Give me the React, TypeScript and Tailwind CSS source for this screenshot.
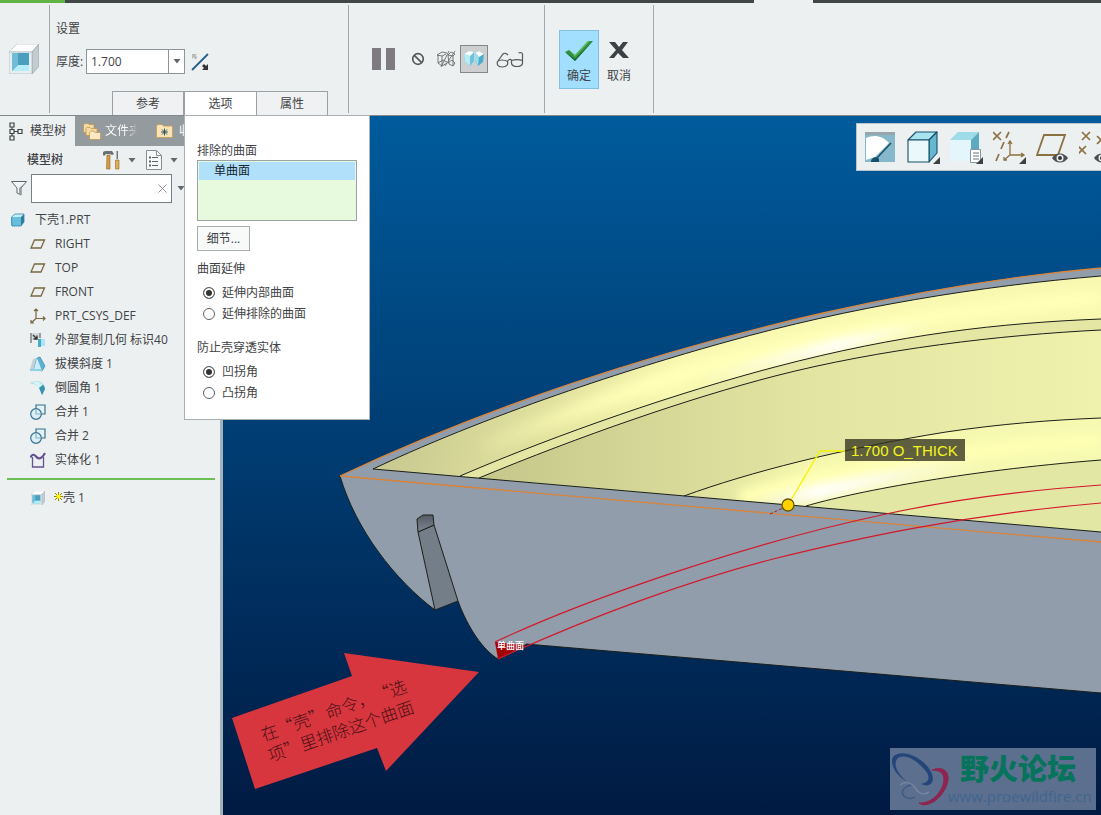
import { useState } from "react";
import type { ReactNode } from "react";

const font =
  "font-['Open_Sans','Noto_Sans_CJK_SC',sans-serif] text-xs text-[#3f4345]";

const Caret = () => (
  <svg width="8" height="5" viewBox="0 0 8 5" aria-hidden="true">
    <path d="M.5 0h7L4 4.500z" fill="#62686b" />
  </svg>
);

const ShellIcon = ({ size }: { size: number }) => (
  <svg width={size} height={size} viewBox="0 0 30 30" aria-hidden="true">
    <path d="M0 8 8 0h22l-7 8z" fill="#fff" stroke="#b9c2c6" strokeWidth=".7" />
    <path d="M23 8 30 0v22l-7 8z" fill="#c3ccd1" stroke="#929da3" strokeWidth=".7" />
    <path d="M0 8h23v22H0z" fill="#e8eff3" stroke="#a3b3bb" strokeWidth=".7" />
    <path d="M3 9h17v18H3z" fill="#7cc4dc" />
    <path d="M9 9h11v12H9z" fill="#4b9fbe" />
    <path d="M3 27l6-6h11v6z" fill="#b4ecf8" />
    <path d="M3 9l6 0v12l-6 6z" fill="#70bbd5" />
  </svg>
);

const FlipIcon = () => (
  <svg width="18" height="18" viewBox="0 0 18 18" aria-hidden="true">
    <path d="M1 17 17 1" stroke="#235f86" strokeWidth="1.8" />
    <path d="M1 1h5L4.500 2.500l2 2-2 2-2-2L1 6z" fill="#b9bcb9" />
    <path d="M17 17h-6l2-2-2-2 2-2 2 2 2-2z" fill="#333" />
  </svg>
);

const PauseIcon = () => (
  <svg width="23" height="22" viewBox="0 0 23 22" aria-hidden="true">
    <path d="M0 0h9v22H0zM14 0h9v22h-9z" fill="#7d7b7f" />
  </svg>
);

const NoneIcon = () => (
  <svg width="14" height="14" viewBox="0 0 14 14" fill="none" stroke="#55595b" strokeWidth="1.7" aria-hidden="true">
    <circle cx="7" cy="7" r="5.3" />
    <path d="M3.3 3.3 10.7 10.7" />
  </svg>
);

const WireIcon = () => (
  <svg width="20" height="18" viewBox="0 0 20 18" fill="none" stroke="#686c6e" strokeWidth=".9" aria-hidden="true">
    <path d="M1 5l5-3 5 1M1 5l5 1 4-2M2 5v8l4 3V6M6 16l5-3M12 5l5 1 2-2-4-2zM12 5l1 9 4 2V6M17 16l2-3M13 1 5 17M19 1 9 16M2 13l5-3 4 2M12 13l4-3 3 3" />
  </svg>
);

const GeometryIcon = () => (
  <svg width="20" height="16" viewBox="0 0 20 16" aria-hidden="true">
    <path d="M0 3l5-3 5 1 0 9-4 5-5-4z" fill="#6cc3dc" />
    <path d="M0 3l5-3 5 1-4 4z" fill="#fff" />
    <path d="M0 3l6 2v10l-5-4z" fill="#b9eaf5" />
    <path d="M11 2l4-2 5 3-1 8-5 4-3-5z" fill="#4badc9" />
    <path d="M11 2l4-2 5 3-5 3z" fill="#fff" />
    <path d="M11 2l4 4-1 9-3-5z" fill="#9bdeed" />
  </svg>
);

const GlassesIcon = () => (
  <svg width="28" height="17" viewBox="0 0 28 17" fill="none" stroke="#55595b" strokeWidth="1.2" aria-hidden="true">
    <path d="M1.500 10.500c2-2 7-2 10 0 1 3-1 5.500-5 5.500s-6-2-5-5.500zM15.500 9.500c3-1 8-1 11 0v3c-1 4-10 4-11 0zM11.500 10.500c1-2 3-3 4-1M2 10l5-7c1-1 3-1 5 1M26.500 9.500V3c0-1-2-2-4-1" />
  </svg>
);

const CheckIcon = () => (
  <svg width="30" height="22" viewBox="0 0 30 22" aria-hidden="true">
    <path d="M1 12l4-2 6 5L24 1h5L11 21z" fill="#2f9140" />
    <path d="M5 10l6 5L24 1h2L11 17z" fill="#5bbd5a" />
    <path d="M1 12l10 7L29 1 11 21z" fill="#1b6a33" />
  </svg>
);

const CrossIcon = () => (
  <svg width="20" height="17" viewBox="0 0 20 17" aria-hidden="true">
    <path d="M0 0h6l4 5 4-5h5l-6 8 7 8h-6l-5-5-4 5H0l7-8z" fill="#3b4144" />
  </svg>
);

const TreeTabIcon = () => (
  <svg width="14" height="19" viewBox="0 0 14 19" fill="none" stroke="#3b4144" strokeWidth="1.2" aria-hidden="true">
    <path d="M1 1h4v4H1zM1 14h4v4H1zM9 7.500h4v4H9zM1 7.500h4v4H1zM3 5v2M3 12v2M5 9.500h4" />
  </svg>
);

const FoldersIcon = () => (
  <svg width="18" height="17" viewBox="0 0 18 17" fill="#f3d9a4" stroke="#bf9048" strokeWidth=".7" aria-hidden="true">
    <path d="M.5 1.5 2 .5h3l1 1h5v8H.5z" />
    <path d="M3 5.5l1-1h3l1 1h6v7H3z" />
    <path d="M6.500 9.500 8 8h3l1 1.500h5.500v7h-11z" fill="#fae9c2" />
  </svg>
);

const FavoritesIcon = () => (
  <svg width="17" height="14" viewBox="0 0 17 14" aria-hidden="true">
    <path d="M.5 2 2 .5h4L7.500 2h9v11.500H.5z" fill="#f8e4b6" stroke="#c99b52" strokeWidth=".8" />
    <path d="M8.500 4.500v7M5 8h7M6 5.500l5 5M11 5.500l-5 5" stroke="#234b5b" strokeWidth=".9" />
  </svg>
);

const ToolsIcon = () => (
  <svg width="17" height="20" viewBox="0 0 17 20" aria-hidden="true">
    <path d="M0 2l2-1h7l2 3-2 1-2-1H3L1 6 0 5z" fill="#6b7175" />
    <path d="M4 5h3v14H3.500z" fill="#d69a45" stroke="#8f6427" strokeWidth=".6" />
    <path d="M13.500 1h1.500v8h-1.500z" fill="#70777b" />
    <path d="M12.500 10h3.500v9h-3.500z" fill="#e0ad58" stroke="#8f6427" strokeWidth=".6" />
  </svg>
);

const DocIcon = () => (
  <svg width="16" height="20" viewBox="0 0 16 20" fill="none" stroke="#5e6568" aria-hidden="true">
    <path d="M.5.5h10l5 5v14H.5z" fill="#f8fafa" stroke="#868e92" />
    <path d="M10.500.5v5h5" stroke="#868e92" />
    <path d="M6 7.500h6M6 11.500h6M6 15.500h6" />
    <path d="M3 7.500h2M3 11.500h2M3 15.500h2" strokeWidth="2" />
  </svg>
);

const FunnelIcon = () => (
  <svg width="16" height="15" viewBox="0 0 16 15" aria-hidden="true">
    <path d="M.5.5h15L10 7v7L6 12V7z" fill="#f4f6f7" stroke="#5e6568" />
    <path d="M8 7v6l2 1V7l5-6z" fill="#9aa1a4" />
  </svg>
);

const PartIcon = () => (
  <svg width="14" height="14" viewBox="0 0 14 14" aria-hidden="true">
    <path d="M0 4l4-3h9l-3 3z" fill="#c5eef8" />
    <path d="M0 4h10v9H1L0 12z" fill="#69bfdb" />
    <path d="M10 4l3-3v8l-3 4z" fill="#2d7c9d" />
    <path d="M.5 4 4 1h9v8l-3 4H1z" fill="none" stroke="#3587a8" strokeWidth=".8" />
  </svg>
);

const PlaneIcon = () => (
  <svg width="16" height="16" viewBox="0 0 16 16" fill="none" stroke="#77683d" strokeWidth="1.300" aria-hidden="true">
    <path d="M4.500 4h10l-3.500 8H1z" />
  </svg>
);

const CsysIcon = () => (
  <svg width="16" height="16" viewBox="0 0 16 16" fill="none" stroke="#77683d" strokeWidth="1.200" aria-hidden="true">
    <path d="M6 1v9.500h9M6 10.500 1 15M4 3l2-2 2 2M13 8.500l2 2-2 2M1 12v3h3" />
  </svg>
);

const CopyGeomIcon = () => (
  <svg width="16" height="16" viewBox="0 0 16 16" aria-hidden="true">
    <path d="M1 1v10M10 1v5" stroke="#5f6669" strokeWidth="1.200" />
    <path d="M2 1h7v7H2z" fill="#d3d9dc" />
    <path d="M3 3l4 4M7 3.500V7H3.500" fill="none" stroke="#333" strokeWidth="1.300" />
    <path d="M8 7h7v7H8z" fill="#a9e5f5" />
    <path d="M8 7h3v8H8z" fill="#4aa8cb" />
  </svg>
);

const DraftIcon = () => (
  <svg width="16" height="16" viewBox="0 0 16 16" aria-hidden="true">
    <path d="M0 13 3 3l3-1v12z" fill="#c3d2d8" />
    <path d="M4 13 7 2l3-1 5 9-3 5z" fill="#5ab2d2" stroke="#3787a8" strokeWidth=".7" />
    <path d="M4 13 7 2l5 13z" fill="#c9eff9" />
    <path d="M0 13h12v2H0z" fill="#8fd0e2" />
  </svg>
);

const RoundIcon = () => (
  <svg width="16" height="16" viewBox="0 0 16 16" aria-hidden="true">
    <path d="M0 3l6-2c6 1 9 4 9 8l-3 6c0-6-4-11-12-12z" fill="#5ab4d1" />
    <path d="M0 3l6-2c4 1 6 2 7 4L9 8C7 5 4 3 0 3z" fill="#d5f4fa" />
    <path d="M9 8l4-3 2 4-3 6z" fill="#3c91b3" />
  </svg>
);

const MergeIcon = () => (
  <svg width="16" height="16" viewBox="0 0 16 16" fill="none" stroke="#37718f" strokeWidth="1.200" aria-hidden="true">
    <path d="M6 5.500V1h9v9h-4" fill="#e2f1f6" />
    <circle cx="6" cy="10" r="5.300" fill="#dceff5" />
    <path d="M6 5v5h5" stroke="#7fb5cb" />
  </svg>
);

const SolidifyIcon = () => (
  <svg width="16" height="16" viewBox="0 0 16 16" fill="none" stroke="#67508f" aria-hidden="true">
    <path d="M2.500 5v10h11V5" strokeWidth="1.300" />
    <path d="M.5 5.500C2 2 4 2 6 4.500S11 8 15 1" strokeWidth="2.200" />
  </svg>
);

type Item = { label: string; icon: ReactNode };

const features: Item[] = [
  { label: "RIGHT", icon: <PlaneIcon /> },
  { label: "TOP", icon: <PlaneIcon /> },
  { label: "FRONT", icon: <PlaneIcon /> },
  { label: "PRT_CSYS_DEF", icon: <CsysIcon /> },
  { label: "外部复制几何 标识40", icon: <CopyGeomIcon /> },
  { label: "拔模斜度 1", icon: <DraftIcon /> },
  { label: "倒圆角 1", icon: <RoundIcon /> },
  { label: "合并 1", icon: <MergeIcon /> },
  { label: "合并 2", icon: <MergeIcon /> },
  { label: "实体化 1", icon: <SolidifyIcon /> },
];

const RadioGroup = ({ name, title, options }: { name: string; title: string; options: string[] }) => {
  const [value, setValue] = useState(options[0]);
  return (
    <fieldset>
      <legend className="leading-5">{title}</legend>
      <div className="pl-1.5 pt-[3px]">
        {options.map((o) => (
          <label key={o} className="flex h-[21px] items-center gap-[7px]">
            <input
              type="radio"
              name={name}
              checked={value === o}
              onChange={() => setValue(o)}
              className="size-3 appearance-none rounded-full border border-[#5c6265] bg-white checked:bg-[#333] checked:shadow-[inset_0_0_0_2px_white]"
            />
            {o}
          </label>
        ))}
      </div>
    </fieldset>
  );
};

const OptionsPanel = () => (
  <div className="absolute left-0 top-full z-20 w-[186px] border border-[#a8b0b4] bg-white pb-4 pl-3 pr-3 pt-[26px] text-left text-[#3f4345]">
    <p className="leading-[18px]">排除的曲面</p>
    <ul role="listbox" aria-label="排除的曲面" className="h-[61px] border border-[#9aa3a7] bg-[#e8fade] p-px">
      <li role="option" aria-selected="true" className="bg-[#b0e0fa] pl-[15px] leading-[18px] text-[#16242c]">
        单曲面
      </li>
    </ul>
    <button className="mt-[5px] h-[25px] w-[53px] border border-[#a8adb0] bg-[#f8f9f9]">细节...</button>
    <div className="mt-2 flex flex-col gap-3.5">
      <RadioGroup name="extend" title="曲面延伸" options={["延伸内部曲面", "延伸排除的曲面"]} />
      <RadioGroup name="corner" title="防止壳穿透实体" options={["凹拐角", "凸拐角"]} />
    </div>
  </div>
);

const Ribbon = () => (
  <header className="flex h-[113px] border-b border-[#81898c] bg-[#edf0f1]">
    <div className="flex w-[49px] items-center pl-[9px]">
      <ShellIcon size={30} />
    </div>
    <Divider />
    <section className="flex w-[298px] flex-col pt-[17px]">
      <h2 className="pl-1.5 leading-[18px]">设置</h2>
      <div className="mt-[11px] flex h-[25px] items-center pl-1.5">
        <label htmlFor="thickness" className="w-[30px] whitespace-nowrap">
          厚度:
        </label>
        <div className="flex h-[25px] w-[99px] border border-[#8d9598] bg-white">
          <input id="thickness" defaultValue="1.700" className="w-full min-w-0 px-1 outline-none" />
          <button aria-label="厚度列表" className="flex w-4 shrink-0 items-center justify-center border-l border-[#8d9598]">
            <Caret />
          </button>
        </div>
        <button aria-label="反向" className="ml-1.5">
          <FlipIcon />
        </button>
      </div>
      <nav className="mt-auto flex pl-[62px]">
        <button className="h-6 w-[72px] border border-b-0 border-[#9aa1a4] bg-[#eff1f2]">参考</button>
        <div className="relative">
          <button className="h-6 w-[72px] border-l border-t border-[#9aa1a4] bg-white">选项</button>
          <OptionsPanel />
        </div>
        <button className="h-6 w-[72px] border border-b-0 border-[#9aa1a4] bg-[#eff1f2]">属性</button>
      </nav>
    </section>
    <Divider />
    <section className="flex w-[195px] items-center pl-[23px]">
      <button aria-label="暂停">
        <PauseIcon />
      </button>
      <button aria-label="无预览" className="ml-4">
        <NoneIcon />
      </button>
      <button aria-label="分离" className="ml-[11px]">
        <WireIcon />
      </button>
      <button aria-label="连接" className="ml-1 flex size-7 items-center justify-center border border-[#83888a] bg-[#cdcfd0]">
        <GeometryIcon />
      </button>
      <button aria-label="特征预览" className="ml-2">
        <GlassesIcon />
      </button>
    </section>
    <Divider />
    <section className="flex w-[108px] items-center pl-3.5">
      <button className="flex h-[59px] w-10 flex-col items-center justify-between border border-[#83bfe0] bg-[#a2dfff] pb-[3px] pt-[9px]">
        <CheckIcon />
        <span className="leading-[18px]">确定</span>
      </button>
      <button className="flex h-[59px] w-10 flex-col items-center justify-between pb-1 pt-3">
        <CrossIcon />
        <span className="leading-[18px]">取消</span>
      </button>
    </section>
    <Divider />
  </header>
);

const Divider = () => <div className="my-0.5 w-px shrink-0 bg-[#a2a9ac]" />;

const ModelTree = () => (
  <aside className="w-[223px] shrink-0 border-r-[3px] border-[#a3b1bb] bg-[#edf0f1]">
    <div className="flex h-[30px] overflow-hidden">
      <button className="flex w-[75px] shrink-0 items-center gap-[7px] whitespace-nowrap pl-[9px]">
        <TreeTabIcon />
        模型树
      </button>
      <button className="flex w-[73px] shrink-0 items-center gap-1 whitespace-nowrap bg-[#939b9e] pl-2 text-white">
        <FoldersIcon />
        <span className="bg-linear-to-r from-white from-60% to-transparent to-90% bg-clip-text text-transparent">
          文件夹
        </span>
      </button>
      <button className="flex grow items-center gap-1.5 whitespace-nowrap bg-[#939b9e] pl-2 text-white">
        <FavoritesIcon />
        收藏夹
      </button>
    </div>
    <div className="flex h-7 items-center pl-[27px]">
      <h2 className="w-[76px] font-medium">模型树</h2>
      <button aria-label="设置" className="flex items-center gap-2">
        <ToolsIcon />
        <Caret />
      </button>
      <button aria-label="显示" className="ml-2.5 flex items-center gap-2">
        <DocIcon />
        <Caret />
      </button>
    </div>
    <div className="flex h-[29px] items-center pl-[11px]">
      <FunnelIcon />
      <div className="ml-1 flex h-[29px] w-[141px] items-center border border-[#777f82] bg-white pr-1">
        <input aria-label="过滤" className="h-full min-w-0 grow px-1 outline-none" />
        <button aria-label="清除">
          <svg width="9" height="9" viewBox="0 0 9 9" stroke="#8d9396" aria-hidden="true">
            <path d="M.5.5l8 8M8.500.5l-8 8" />
          </svg>
        </button>
      </div>
      <button aria-label="过滤选项" className="ml-[5px]">
        <Caret />
      </button>
    </div>
    <div className="mt-[5px] flex h-6 items-center gap-2.5 pl-[11px]">
      <PartIcon />
      下壳1.PRT
    </div>
    <ul>
      {features.map((f) => (
        <li key={f.label} className="flex h-6 items-center gap-[9px] whitespace-nowrap pl-[30px]">
          {f.icon}
          {f.label}
        </li>
      ))}
    </ul>
    <div className="ml-[7px] mr-[5px] mt-1.5 h-0.5 bg-[#6cbf55]" />
    <div className="mt-1.5 flex h-6 items-center pl-[31px]">
      <ShellIcon size={14} />
      <svg className="mb-1 ml-[9px]" width="9" height="9" viewBox="0 0 9 9" stroke="#8b8a00" aria-hidden="true">
        <path d="M4.500 0v9M0 4.500h9M1 1l7 7M8 1 1 8" />
        <path d="M3 3h3v3H3z" fill="#fff200" stroke="#fff200" />
      </svg>
      壳 1
    </div>
  </aside>
);

const Corner = () => <path d="M33 27v7h-7z" fill="#3b4144" />;

const Toolbar = () => (
  <div className="absolute right-0 top-[7px] z-10 flex h-[48px] w-[245px] items-center gap-[7px] overflow-hidden border border-r-0 border-[#b9c3ca] bg-[#edf0f1] pl-[7px]">
    <button aria-label="重新调整" className="shrink-0">
      <svg width="36" height="34" viewBox="0 0 36 34" aria-hidden="true">
        <path d="M1 2h30v30H1z" fill="#85b8ca" />
        <path d="M1 2h30v3H1z" fill="#98a6ab" />
        <path d="M2 8c8-4 17-2 23 5L11 27 2 30z" fill="#fff" />
        <path d="M27 13 12 29" stroke="#184f6b" strokeWidth="1.500" />
        <path d="M7 32c0-5 6-6 8-3v3z" fill="#184f6b" />
      </svg>
    </button>
    <button aria-label="显示样式" className="shrink-0">
      <svg width="36" height="34" viewBox="0 0 36 34" stroke="#174e68" strokeWidth="1.100" strokeLinejoin="round" aria-hidden="true">
        <path d="M1 10 9 2h21l-8 8z" fill="#a7e4ef" />
        <path d="M22 10l8-8v21l-8 9z" fill="#65b8cf" />
        <path d="M1 10h21v22H1z" fill="#eaf8fb" />
        <g stroke="none"><Corner /></g>
      </svg>
    </button>
    <button aria-label="已保存方向" className="shrink-0">
      <svg width="36" height="34" viewBox="0 0 36 34" aria-hidden="true">
        <path d="M0 10 8 2h21l-8 8z" fill="#9fdcea" />
        <path d="M21 10l8-8v21l-8 8z" fill="#5daac3" />
        <path d="M0 10h21v21H0z" fill="#e5f5fc" />
        <path d="M20.500 19.500h10v13h-10z" fill="#fff" stroke="#8b979d" />
        <path d="M23 23h6M23 26h6M23 29h6" stroke="#69767d" />
        <Corner />
      </svg>
    </button>
    <button aria-label="基准显示" className="shrink-0">
      <svg width="36" height="34" viewBox="0 0 36 34" fill="none" stroke="#8a7141" strokeWidth="1.700" aria-hidden="true">
        <path d="M0 2l8 8M8 2 0 10M16 2l-3 6M11 12l-3 7M6 24l-3 7" />
        <path d="M17 12v13h13M17 25l-6 5M15 14l2-3 2 3M28 23l3 2-3 2M11 27v3h3" strokeWidth="1.300" />
        <g stroke="none"><Corner /></g>
      </svg>
    </button>
    <button aria-label="平面显示" className="shrink-0">
      <svg width="36" height="34" viewBox="0 0 36 34" aria-hidden="true">
        <path d="M8 5h21l-7 20H1z" fill="none" stroke="#8a7141" strokeWidth="1.800" />
        <Eye x={24} />
      </svg>
    </button>
    <button aria-label="点显示" className="shrink-0">
      <svg width="36" height="34" viewBox="0 0 36 34" aria-hidden="true">
        <path d="M3 2l8 8M11 2l-8 8M18 6l8 8M26 6l-8 8M-1 16l8 8M7 16l-8 8" fill="none" stroke="#8a7141" strokeWidth="1.700" />
        <Eye x={23} />
      </svg>
    </button>
  </div>
);

const Eye = ({ x }: { x: number }) => (
  <g>
    <path d={`M${x - 8} 28c4-6 12-6 16 0-4 6-12 6-16 0z`} fill="#4b5052" />
    <circle cx={x} cy="28" r="3.500" fill="#edf0f1" />
    <circle cx={x} cy="28" r="2" fill="#333" />
  </g>
);

// curves of the shell, left to right
const rim = "M340 476C480 410 650 352 823 313C920 291 1010 276 1101 268";
const inner = "M373 469C500 409 650 363 726 342C850 307 980 286 1101 276";
const ledgeTop = "M460 476C560 433 680 392 775 367C900 334 1000 323 1101 319";
const ledgeBottom = "M479 478C580 436 690 398 775 376C880 349 1000 335 1101 330";
const bossTop = "M684 496C750 472 840 449 946 432C1000 424 1050 420 1101 418";
const bossBottom = "M806 506C850 493 960 471 1101 460";

const Viewport = () => (
  <svg
    className="absolute inset-0 size-full"
    viewBox="223 116 878 699"
    preserveAspectRatio="xMinYMin slice"
    role="img"
    aria-label="下壳1.PRT"
  >
    <defs>
      <linearGradient id="sky" x1="0" y1="0" x2="0" y2="1">
        <stop offset="0" stopColor="#005b9c" />
        <stop offset="1" stopColor="#001a42" />
      </linearGradient>
      <linearGradient id="wall" gradientUnits="userSpaceOnUse" x1="400" y1="430" x2="640" y2="500">
        <stop offset="0" stopColor="#c9ca91" />
        <stop offset=".5" stopColor="#dfdf9d" />
        <stop offset="1" stopColor="#f8f8b0" />
      </linearGradient>
      <linearGradient id="floor" gradientUnits="userSpaceOnUse" x1="479" y1="0" x2="1101" y2="0">
        <stop offset="0" stopColor="#c5c78b" />
        <stop offset=".5" stopColor="#e1e4a0" />
        <stop offset="1" stopColor="#eef2ad" />
      </linearGradient>
      <linearGradient id="boss" gradientUnits="userSpaceOnUse" x1="690" y1="0" x2="1101" y2="0">
        <stop offset="0" stopColor="#dde09d" />
        <stop offset=".3" stopColor="#f5f7ae" />
        <stop offset="1" stopColor="#f6f9b2" />
      </linearGradient>
      <linearGradient id="wallGlow" gradientUnits="userSpaceOnUse" x1="460" y1="0" x2="1101" y2="0">
        <stop offset="0" stopColor="#ffffb8" stopOpacity="0" />
        <stop offset=".3" stopColor="#ffffb8" />
        <stop offset="1" stopColor="#ffffb8" />
      </linearGradient>
      <linearGradient id="wallShine" gradientUnits="userSpaceOnUse" x1="700" y1="0" x2="930" y2="0">
        <stop offset="0" stopColor="#fff" stopOpacity="0" />
        <stop offset=".6" stopColor="#fff" />
        <stop offset="1" stopColor="#fff" stopOpacity="0" />
      </linearGradient>
      <linearGradient id="bossShine" gradientUnits="userSpaceOnUse" x1="750" y1="0" x2="980" y2="0">
        <stop offset="0" stopColor="#fff" stopOpacity="0" />
        <stop offset=".3" stopColor="#fff" />
        <stop offset="1" stopColor="#fff" stopOpacity="0" />
      </linearGradient>
      <linearGradient id="slot" x1="0" y1="0" x2="0" y2="1">
        <stop offset="0" stopColor="#565b66" />
        <stop offset="1" stopColor="#7d8691" />
      </linearGradient>
      <filter id="soft" x="-20%" y="-50%" width="140%" height="200%">
        <feGaussianBlur stdDeviation="5" />
      </filter>
      <clipPath id="wallClip">
        <path d={`${inner}V319C1000 323 900 334 775 367C680 392 560 433 460 476Z`} />
      </clipPath>
      <clipPath id="bossClip">
        <path d={`${bossTop}V460C960 471 850 493 806 506Z`} />
      </clipPath>
    </defs>
    <rect x="223" y="116" width="878" height="699" fill="url(#sky)" />
    <path
      d={`${rim}V693L526 644L498 659C483 650 468 628 458 601L435 610C395 580 356 530 340 476Z`}
      fill="#919daa"
    />
    <path d={`${inner}V532Z`} fill="url(#wall)" />
    <g clipPath="url(#wallClip)" fill="none" filter="url(#soft)">
      <path d="M480 448C600 400 700 366 775 348C880 322 1000 305 1101 298" stroke="url(#wallGlow)" strokeWidth="18" />
      <path d="M690 384C750 368 850 340 940 324" stroke="url(#wallShine)" strokeWidth="12" />
    </g>
    <path d={`${ledgeTop}V532Z`} fill="#e4e6a4" />
    <path d={`${ledgeBottom}V532Z`} fill="url(#floor)" />
    <path d={`${bossTop}V532Z`} fill="url(#boss)" />
    <g clipPath="url(#bossClip)" fill="none" filter="url(#soft)">
      <path d="M740 498C850 465 980 448 1101 440" stroke="#ffffb4" strokeWidth="16" />
      <path d="M750 506C820 492 900 474 980 464" stroke="url(#bossShine)" strokeWidth="15" />
    </g>
    <path d={`${bossBottom}V532Z`} fill="#e3e7a4" />
    <path d="M684 496 1101 532V541L684 505z" fill="#919daa" />
    <g fill="none" stroke="#1b1f1a">
      <path d={inner} />
      <path d={ledgeTop} />
      <path d={ledgeBottom} />
      <path d={bossTop} />
      <path d={bossBottom} />
      <path d="M373 469 1101 532M526 644 1101 693" />
      <path d="M340 476C356 530 395 580 435 610M458 601C468 628 483 650 498 659" />
    </g>
    <path d="M418 532 434 525 458 601 435 610z" fill="#747e89" stroke="#1b1f1a" />
    <path d="M417 519 423 515H433L434 525 418 532z" fill="url(#slot)" stroke="#1b1f1a" />
    <g fill="none" stroke="#d8843c" strokeWidth="1.300">
      <path d={rim} />
      <path d="M340 476 1101 542" />
    </g>
    <path d="M495 642 526 645 498 659z" fill="#a30008" />
    <g fill="none" stroke="#d3182a" strokeWidth="1.100">
      <path d="M495 642C580 602 740 545 886 514C960 498 1030 490 1101 485" />
      <path d="M498 659C590 617 690 580 773 559C850 540 960 515 1101 503" />
    </g>
    <text x="497" y="649" fill="#fff" className="font-['Noto_Sans_CJK_SC',sans-serif] text-[9px] font-medium">
      单曲面
    </text>
    <path d="M788 505 820 451H845" fill="none" stroke="#f4f400" strokeWidth="1.300" />
    <path d="M770 514 783 508" stroke="#9c1d20" strokeDasharray="3 2" />
    <circle cx="788" cy="505" r="6" fill="#ffd200" stroke="#6d5600" strokeWidth="1.300" />
    <rect x="845" y="439" width="120" height="22" fill="#33331f" fillOpacity=".78" />
    <text x="851" y="456" fill="#f4f41e" className="font-['Liberation_Sans',sans-serif] text-[15px]">
      1.700 O_THICK
    </text>
    <path d="M232 718 352 676 344 653 479 672 386 771 377 748 255 789z" fill="#d8363e" />
    <g
      transform="translate(269 733) rotate(-19)"
      fill="#4c1115"
      className="font-['Noto_Sans_CJK_SC',sans-serif] text-[17px] font-light [text-spacing-trim:space-all]"
    >
      <text x="-8" y="6">在“壳”命令，“选</text>
      <text x="-8" y="28">项”里排除这个曲面</text>
    </g>
    <rect x="890" y="748" width="206" height="62" fill="#5c6f8e" />
    <g>
      <path
        d="M893 757C901 747 926 758 932 774C935 783 930 788 921 784C931 782 930 775 924 769C913 756 899 753 896 761C894 768 900 777 908 782C897 777 889 764 893 757z"
        fill="#23457a"
      />
      <path
        d="M932 770C945 765 952 774 946 787C939 802 925 808 919 803C929 804 939 796 943 785C946 775 942 770 932 770z"
        fill="#8e2450"
        stroke="#8e2450"
      />
      <path d="M912 785c-8 1-12 7-8 11 3 3 8 3 11 1" fill="none" stroke="#3d5a85" strokeWidth="1.500" />
      <path d="M900 785c6-5 12-2 16 4s8 6 13 3" fill="none" stroke="#7486a3" strokeWidth="1.500" />
    </g>
    <text x="960" y="780" fill="#06745c" className="font-['Noto_Sans_CJK_SC',sans-serif] text-[29px] font-black">
      野火论坛
    </text>
    <text x="948" y="802" fill="#40658f" className="font-['Open_Sans',sans-serif] text-[15px]">
      www.proewildfire.cn
    </text>
  </svg>
);

const App = () => (
  <div className={`${font} flex min-h-screen flex-col bg-[#edf0f1]`}>
    <div className="flex h-[3px]">
      <div className="w-[65px] bg-[#62b345]" />
      <div className="w-[689px] bg-[#414746]" />
      <div className="w-[59px] bg-[#edf0f1]" />
      <div className="grow bg-[#414746]" />
    </div>
    <Ribbon />
    <main className="flex grow">
      <ModelTree />
      <div className="relative grow overflow-hidden">
        <Viewport />
        <Toolbar />
      </div>
    </main>
  </div>
);

export default App;
